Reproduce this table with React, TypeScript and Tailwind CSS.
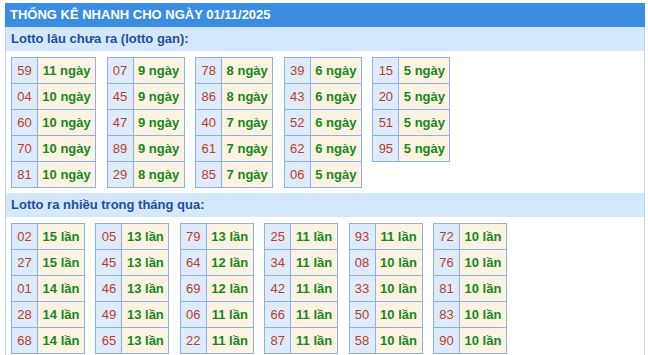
const ganTables: [string, number][][] = [
  [["59", 11], ["04", 10], ["60", 10], ["70", 10], ["81", 10]],
  [["07", 9], ["45", 9], ["47", 9], ["89", 9], ["29", 8]],
  [["78", 8], ["86", 8], ["40", 7], ["61", 7], ["85", 7]],
  [["39", 6], ["43", 6], ["52", 6], ["62", 6], ["06", 5]],
  [["15", 5], ["20", 5], ["51", 5], ["95", 5]],
]

const hotTables: [string, number][][] = [
  [["02", 15], ["27", 15], ["01", 14], ["28", 14], ["68", 14]],
  [["05", 13], ["45", 13], ["46", 13], ["49", 13], ["65", 13]],
  [["79", 13], ["64", 12], ["69", 12], ["06", 11], ["22", 11]],
  [["25", 11], ["34", 11], ["42", 11], ["66", 11], ["87", 11]],
  [["93", 11], ["08", 10], ["33", 10], ["50", 10], ["58", 10]],
  [["72", 10], ["76", 10], ["81", 10], ["83", 10], ["90", 10]],
]

const StatTable = ({
  rows,
  unit,
  gridClass,
}: {
  rows: [string, number][]
  unit: string
  gridClass: string
}) => {
  return (
    <div className={`grid self-start border-l border-t border-[#8db1ee] ${gridClass}`}>
      {rows.map(([num, count]) => (
        <div key={num} className="contents">
          <div className="flex h-[26px] items-center justify-center border-b border-r border-[#8db1ee] bg-[#deebfd] text-[13px] text-[#b9401f]">
            {num}
          </div>
          <div className="flex h-[26px] items-center justify-center border-b border-r border-[#8db1ee] bg-[#fdf3e2] text-[13px] font-bold text-[#15881a]">
            {count} {unit}
          </div>
        </div>
      ))}
    </div>
  )
}

export default function App() {
  return (
    <div className="h-[355px] w-[648px] bg-white pl-[5px] pt-[3px] font-['Liberation_Sans',Arial,sans-serif]">
      <div className="w-[640px]">
        <div className="flex h-[24px] items-center bg-[#3a8de0] px-[5px] text-[13px] font-bold text-white">
          THỐNG KÊ NHANH CHO NGÀY 01/11/2025
        </div>

        <div className="border-x border-[#c3d5eb]">
          <div className="flex h-[24px] items-center bg-[#d4e8fc] px-[5px] text-[13px] font-bold text-[#1d4fa2]">
            Lotto lâu chưa ra (lotto gan):
          </div>
          <div className="flex gap-[10.6px] px-[5px] pb-[5px] pt-[6px]">
            {ganTables.map((rows, i) => (
              <StatTable
                key={i}
                rows={rows}
                unit="ngày"
                gridClass={i === 0 ? "grid-cols-[26px_58px]" : "grid-cols-[26px_51px]"}
              />
            ))}
          </div>

          <div className="flex h-[24px] items-center bg-[#d4e8fc] px-[5px] text-[13px] font-bold text-[#1d4fa2]">
            Lotto ra nhiều trong tháng qua:
          </div>
          <div className="flex gap-[10.4px] px-[5px] pb-[5px] pt-[6px]">
            {hotTables.map((rows, i) => (
              <StatTable key={i} rows={rows} unit="lần" gridClass="grid-cols-[26px_47px]" />
            ))}
          </div>
        </div>
      </div>
    </div>
  )
}
